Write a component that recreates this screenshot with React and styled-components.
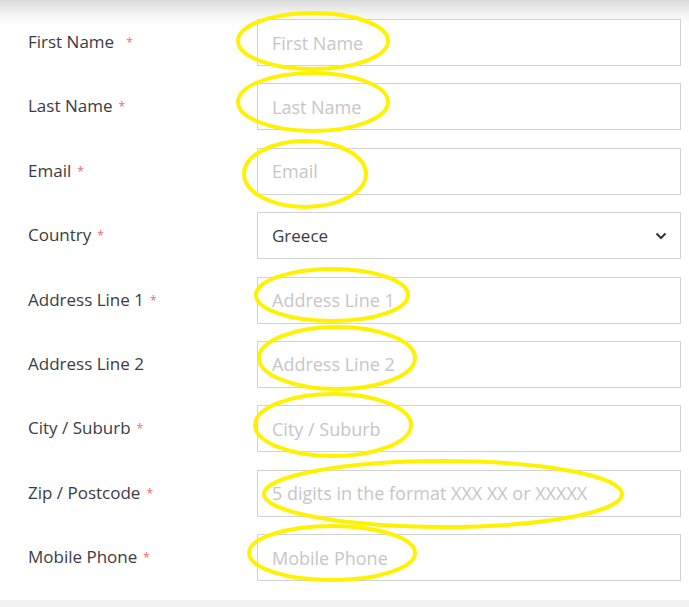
import styled, { createGlobalStyle } from "styled-components";

const GlobalStyle = createGlobalStyle`
  html, body {
    margin: 0;
    padding: 0;
    background: #fff;
  }
  body {
    font-family: "Open Sans", "Liberation Sans", sans-serif;
  }
`;

const fields = [
  { label: "First Name", placeholder: "First Name", wideStar: true },
  { label: "Last Name", placeholder: "Last Name" },
  { label: "Email", placeholder: "Email" },
  { label: "Country", select: "Greece" },
  { label: "Address Line 1", placeholder: "Address Line 1" },
  { label: "Address Line 2", placeholder: "Address Line 2", optional: true },
  { label: "City / Suburb", placeholder: "City / Suburb" },
  { label: "Zip / Postcode", placeholder: "5 digits in the format XXX XX or XXXXX" },
  { label: "Mobile Phone", placeholder: "Mobile Phone" },
];

// hand-drawn highlight marks on the screenshot
const marks = [
  { cx: 313, cy: 41, rx: 75, ry: 28 },
  { cx: 313, cy: 102, rx: 75, ry: 29 },
  { cx: 305, cy: 174, rx: 61, ry: 33 },
  { cx: 332, cy: 295, rx: 76, ry: 26 },
  { cx: 337, cy: 358, rx: 78, ry: 31 },
  { cx: 333, cy: 425, rx: 78, ry: 31 },
  { cx: 443, cy: 494, rx: 179, ry: 33 },
  { cx: 332, cy: 553, rx: 83, ry: 27 },
];

const App = () => {
  return (
    <>
      <GlobalStyle />
      <Page>
        <Form>
          {fields.map((f) => (
            <Row key={f.label}>
              <Label>
                {f.label}
                {!f.optional && <Star $wide={f.wideStar}>*</Star>}
              </Label>
              {f.select ? (
                <SelectBox>
                  <span>{f.select}</span>
                  <svg width="12" height="8" viewBox="0 0 12 8">
                    <path
                      d="M1.5 1.5 L6 6 L10.5 1.5"
                      fill="none"
                      stroke="#333"
                      strokeWidth="2"
                    />
                  </svg>
                </SelectBox>
              ) : (
                <Input placeholder={f.placeholder} />
              )}
            </Row>
          ))}
        </Form>
        <BottomStrip />
        <Marks width="689" height="607" viewBox="0 0 689 607">
          {marks.map((m, i) => (
            <ellipse
              key={i}
              cx={m.cx}
              cy={m.cy}
              rx={m.rx}
              ry={m.ry}
              fill="none"
              stroke="#fff200"
              strokeWidth="4"
            />
          ))}
        </Marks>
      </Page>
    </>
  );
};

const Page = styled.div`
  position: relative;
  width: 689px;
  height: 607px;
  overflow: hidden;
  display: flex;
  flex-direction: column;
  background: linear-gradient(#dadada 0, #f4f4f4 14px, #fff 26px);
`;

const Form = styled.form`
  display: flex;
  flex-direction: column;
  gap: 17.4px;
  padding: 19px 8px 0 28px;
`;

const Row = styled.div`
  display: grid;
  grid-template-columns: 229px 424px;
  align-items: center;
  height: 47px;
`;

const Label = styled.label`
  font-size: 17px;
  color: #3b3b45;
  display: flex;
  align-items: center;
  margin-top: -2px;
`;

const Star = styled.span`
  color: #f06b6b;
  font-size: 12px;
  margin-left: ${({ $wide }) => ($wide ? "12px" : "6px")};
  position: relative;
  top: 1px;
`;

const Input = styled.input`
  box-sizing: border-box;
  height: 47px;
  width: 100%;
  border: 1px solid #d2d2d2;
  background: #fff;
  padding: 0 14px;
  font-family: "Open Sans", "Liberation Sans", sans-serif;
  font-size: 18px;
  color: #333;
  outline: none;

  &::placeholder {
    color: #c6c6c6;
  }
`;

const SelectBox = styled.div`
  box-sizing: border-box;
  height: 47px;
  border: 1px solid #d2d2d2;
  background: #fff;
  padding: 0 13px 0 14px;
  display: flex;
  align-items: center;
  justify-content: space-between;
  font-size: 17px;
  color: #3b3b45;
`;

const BottomStrip = styled.div`
  margin-top: auto;
  height: 7px;
  background: #f2f2f2;
`;

const Marks = styled.svg`
  position: absolute;
  left: 0;
  top: 0;
  pointer-events: none;
`;

export default App;
